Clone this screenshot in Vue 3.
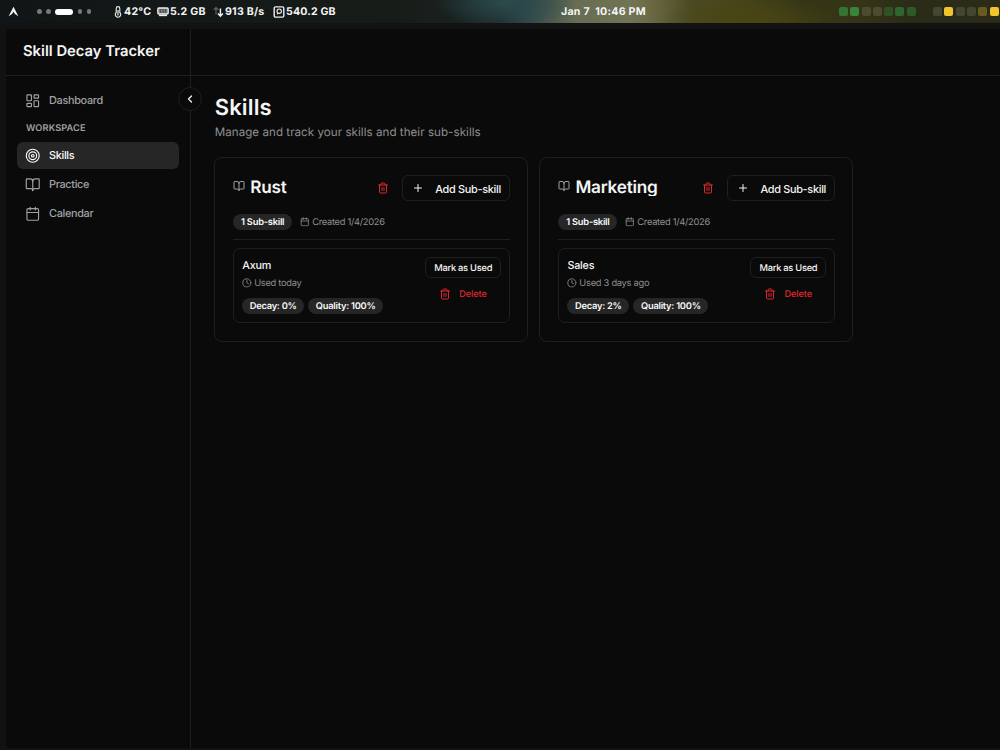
<template>
  <div class="desktop">
    <!-- icon shapes -->
    <svg class="symbols" width="0" height="0">
      <symbol id="dashboard" viewBox="0 0 24 24">
        <rect x="3" y="3" width="7" height="9" rx="1" />
        <rect x="14" y="3" width="7" height="5" rx="1" />
        <rect x="14" y="12" width="7" height="9" rx="1" />
        <rect x="3" y="16" width="7" height="5" rx="1" />
      </symbol>
      <symbol id="target" viewBox="0 0 24 24">
        <circle cx="12" cy="12" r="10" />
        <circle cx="12" cy="12" r="6" />
        <circle cx="12" cy="12" r="2" />
      </symbol>
      <symbol id="book" viewBox="0 0 24 24">
        <path d="M12 7v14" />
        <path d="M3 18a1 1 0 0 1-1-1V4a1 1 0 0 1 1-1h5a4 4 0 0 1 4 4 4 4 0 0 1 4-4h5a1 1 0 0 1 1 1v13a1 1 0 0 1-1 1h-6a3 3 0 0 0-3 3 3 3 0 0 0-3-3z" />
      </symbol>
      <symbol id="calendar" viewBox="0 0 24 24">
        <path d="M8 2v4M16 2v4M3 10h18" />
        <rect x="3" y="4" width="18" height="18" rx="2" />
      </symbol>
      <symbol id="chevron" viewBox="0 0 24 24">
        <path d="m15 18-6-6 6-6" />
      </symbol>
      <symbol id="trash" viewBox="0 0 24 24">
        <path d="M10 11v6M14 11v6M3 6h18" />
        <path d="M19 6v14a2 2 0 0 1-2 2H7a2 2 0 0 1-2-2V6" />
        <path d="M8 6V4a2 2 0 0 1 2-2h4a2 2 0 0 1 2 2v2" />
      </symbol>
      <symbol id="plus" viewBox="0 0 24 24">
        <path d="M5 12h14M12 5v14" />
      </symbol>
      <symbol id="clock" viewBox="0 0 24 24">
        <circle cx="12" cy="12" r="10" />
        <path d="M12 6v6l4 2" />
      </symbol>
    </svg>

    <!-- system bar -->
    <div class="topbar">
      <svg class="arch" viewBox="0 0 12 12"><path d="M6 .7 11.3 11.2 7.6 8.7 6 6.2 4.4 8.7.7 11.2z" fill="#f2f2f2" /></svg>
      <div class="workspaces">
        <i v-for="n in 5" :key="n" :class="{ current: n === 3 }"></i>
      </div>
      <div class="stats">
        <span class="stat temp">
          <svg viewBox="0 0 8 12"><path d="M2.2 6.5V2.4a1.8 1.8 0 0 1 3.6 0v4.1a2.7 2.7 0 1 1-3.6 0z" fill="none" stroke="#eee" stroke-width="1.1" /><path d="M4 4v5.5" stroke="#eee" stroke-width="1.2" /></svg>42°C
        </span>
        <span class="stat ram">
          <svg viewBox="0 0 12 12"><rect x=".8" y="2" width="10.4" height="6" rx="1" fill="#777" stroke="#eee" stroke-width="1.3" /><path d="M2 9.5h8" stroke="#eee" stroke-width="1.3" /><path d="M3.5 3v4M6 3v4M8.5 3v4" stroke="#444" stroke-width=".7" /></svg>5.2 GB
        </span>
        <span class="stat net">
          <svg viewBox="0 0 12 12"><path d="M3 8.5V1.7M.8 3.8 3 1.5l2.2 2.3" fill="none" stroke="#666" stroke-width="1.1" /><path d="M7.4 2.5v7.3M4.9 7.5l2.5 2.6 2.5-2.6" fill="none" stroke="#eee" stroke-width="1.5" /></svg>913 B/s
        </span>
        <span class="stat disk">
          <svg viewBox="0 0 12 12"><rect x="1.2" y=".9" width="9.6" height="10.2" rx="1.3" fill="none" stroke="#eee" stroke-width="1.4" /><circle cx="6.2" cy="5.2" r="2.2" fill="none" stroke="#eee" stroke-width="1.1" /><path d="m4.4 6.2-.6 2.6 2-1.4z" fill="#eee" /></svg>540.2 GB
        </span>
      </div>
      <div class="datetime">Jan 7&nbsp; 10:46 PM</div>
      <div class="squares">
        <i v-for="(c, i) in squares" :key="i" :class="{ split: i === 7 }" :style="{ background: c }"></i>
      </div>
    </div>

    <div class="window">
      <aside class="sidebar">
        <div class="brand">Skill Decay Tracker</div>
        <nav>
          <a class="item"><svg class="icon"><use href="#dashboard" /></svg>Dashboard</a>
          <div class="group">WORKSPACE</div>
          <a v-for="m in menu" :key="m.label" class="item" :class="{ active: m.label === page }" @click="page = m.label">
            <svg class="icon"><use :href="'#' + m.icon" /></svg>{{ m.label }}
          </a>
        </nav>
        <button class="collapse"><svg class="icon"><use href="#chevron" /></svg></button>
      </aside>

      <main>
        <header></header>
        <section class="content">
          <h1>Skills</h1>
          <p class="subtitle">Manage and track your skills and their sub-skills</p>

          <div class="cards">
            <article v-for="s in skills" :key="s.name" class="card">
              <div class="card-head">
                <svg class="icon book"><use href="#book" /></svg>
                <h2>{{ s.name }}</h2>
                <svg class="icon trash"><use href="#trash" /></svg>
                <button class="add"><svg class="icon"><use href="#plus" /></svg><span>Add Sub-skill</span></button>
              </div>
              <div class="meta">
                <span class="badge count">1 Sub-skill</span>
                <svg class="icon"><use href="#calendar" /></svg>
                <span class="created">Created {{ s.created }}</span>
              </div>
              <div class="sub">
                <div class="info">
                  <h3>{{ s.sub }}</h3>
                  <div class="used"><svg class="icon"><use href="#clock" /></svg><span>{{ s.used }}</span></div>
                  <div class="badges">
                    <span class="badge decay">Decay: {{ s.decay }}%</span>
                    <span class="badge quality">Quality: 100%</span>
                  </div>
                </div>
                <div class="actions">
                  <button class="mark">Mark as Used</button>
                  <button class="delete"><svg class="icon"><use href="#trash" /></svg><span>Delete</span></button>
                </div>
              </div>
            </article>
          </div>
        </section>
      </main>
    </div>
  </div>
</template>

<script setup>
import { ref } from 'vue'

const page = ref('Skills')

const menu = [
  { label: 'Skills', icon: 'target' },
  { label: 'Practice', icon: 'book' },
  { label: 'Calendar', icon: 'calendar' }
]

const skills = [
  { name: 'Rust', created: '1/4/2026', sub: 'Axum', used: 'Used today', decay: 0 },
  { name: 'Marketing', created: '1/4/2026', sub: 'Sales', used: 'Used 3 days ago', decay: 2 }
]

const squares = [
  '#357332', '#38843b', '#4c4b30', '#4c4b30', '#315323', '#30652f', '#2e5929',
  '#45462f', '#f0c52f', '#45462f', '#45462f', '#695b1b', '#f0c52f'
]
</script>

<style>
body {
  margin: 0;
  background: #121212;
}
</style>

<style scoped>
* {
  box-sizing: border-box;
}

.desktop {
  width: 1000px;
  height: 750px;
  overflow: hidden;
  display: flex;
  flex-direction: column;
  background: #121212;
  color: #f5f5f5;
  font-family: Inter, sans-serif;
  text-rendering: geometricPrecision;
}

.symbols {
  position: absolute;
}

.icon {
  flex: none;
  fill: none;
  stroke: currentColor;
  stroke-width: 2;
  stroke-linecap: round;
  stroke-linejoin: round;
}

button {
  font-family: inherit;
  color: inherit;
  background: none;
  border: 1px solid #1f1f1f;
  padding: 0;
  display: flex;
  align-items: center;
  text-rendering: inherit;
}

/* system bar */
.topbar {
  height: 23px;
  flex: none;
  display: flex;
  align-items: center;
  background:
    radial-gradient(ellipse 90px 22px at 750px 20px, #4a4512, transparent),
    radial-gradient(ellipse 70px 26px at 505px 2px, #2c4a4d, transparent),
    linear-gradient(90deg, #101617 0, #171c18 400px, #19211f 450px, #1e2d2e 500px, #33494a 530px, #666d52 575px, #717455 630px, #6b6a45 650px, #4b4b23 690px, #47441a 740px, #343617 800px, #353416 860px, #2a2c18 910px, #2b2b18 1000px);
  font-weight: 700;
  font-size: 10.6px;
  letter-spacing: 0.24px;
}

.arch {
  width: 11px;
  height: 11px;
  margin-left: 8px;
}

.workspaces {
  display: flex;
  align-items: center;
  gap: 4.5px;
  margin-left: 18px;
}

.workspaces i {
  width: 4.5px;
  height: 4.5px;
  border-radius: 3px;
  background: #777a7a;
}

.workspaces .current {
  width: 18px;
  height: 6px;
  background: #fff;
}

.stats {
  display: flex;
  margin-left: 23px;
  width: 447px;
}

.stat {
  display: flex;
  align-items: center;
  white-space: nowrap;
}

.stat svg {
  width: 12px;
  height: 12px;
  flex: none;
}

.temp {
  width: 43px;
}

.temp svg {
  width: 8px;
  margin-right: 2px;
}

.ram {
  width: 56px;
}

.ram svg {
  margin-right: 1px;
}

.net {
  width: 60px;
}

.disk {
  letter-spacing: 0.15px;
}

.disk svg {
  margin-right: 1px;
}

.datetime {
  width: 278px;
}

.squares {
  display: flex;
  gap: 2.3px;
}

.squares i {
  width: 9px;
  height: 9px;
  border-radius: 2px;
}

.squares .split {
  margin-left: 15px;
}

/* app window */
.window {
  display: flex;
  width: 1000px;
  height: 719px;
  margin: 6px 0 0 6px;
  border-radius: 4px;
  background: #0a0a0a;
}

.sidebar {
  position: relative;
  width: 185px;
  flex: none;
  border-right: 1px solid #1f1f1f;
}

.brand {
  height: 47px;
  padding-left: 17px;
  line-height: 45px;
  border-bottom: 1px solid #1f1f1f;
  font-size: 14.8px;
  font-weight: 600;
}

nav {
  padding: 11px 11px 0;
}

.item {
  display: flex;
  align-items: center;
  height: 27px;
  margin-bottom: 2px;
  padding: 0 0 1px 8px;
  border-radius: 6px;
  color: #a1a1a1;
  font-size: 10.9px;
  font-weight: 500;
  letter-spacing: -0.33px;
}

.item .icon {
  width: 15.5px;
  height: 15.5px;
  margin: 1px 8.5px 0 0;
  stroke-width: 1.8;
}

.item.active {
  background: #262626;
  color: #fafafa;
}

.group {
  height: 26px;
  padding-left: 9px;
  line-height: 25px;
  color: #a1a1a1;
  font-size: 9.2px;
  font-weight: 600;
  letter-spacing: 0.13px;
}

.collapse {
  position: absolute;
  top: 57.5px;
  right: -12px;
  width: 24px;
  height: 24px;
  justify-content: center;
  border-radius: 50%;
  background: #0a0a0a;
}

.collapse .icon {
  width: 12px;
  height: 12px;
  stroke-width: 2.5;
}

main {
  flex: 1;
}

header {
  height: 47px;
  border-bottom: 1px solid #1f1f1f;
}

.content {
  padding: 19px 0 0 23.2px;
}

h1 {
  margin: 0 0 0 0.5px;
  line-height: 26px;
  font-size: 22px;
  font-weight: 600;
  letter-spacing: 0.15px;
}

.subtitle {
  margin: 2px 0 16px 0.5px;
  line-height: 18px;
  font-size: 11.6px;
  letter-spacing: 0.04px;
  color: #8f8f8f;
}

.cards {
  display: flex;
  gap: 11.2px;
}

.card {
  width: 314px;
  height: 185px;
  padding: 17px 17px 17px 18px;
  border: 1px solid #1f1f1f;
  border-radius: 8px;
}

.card-head {
  display: flex;
  align-items: center;
  height: 26px;
}

.book {
  width: 12px;
  height: 12px;
  margin: -4px 5px 0 0;
  color: #a1a1a1;
}

h2 {
  flex: 1;
  margin: -2px 0 0;
  height: 17px;
  line-height: 18px;
  overflow: hidden;
  font-size: 17.2px;
  font-weight: 600;
  letter-spacing: -0.22px;
}

.trash {
  width: 12px;
  height: 12px;
  margin-right: 13.5px;
  color: #dc262c;
}

.add {
  width: 108px;
  height: 26px;
  padding-left: 9px;
  border-radius: 6px;
  font-size: 10.9px;
  font-weight: 500;
  letter-spacing: -0.3px;
}

.add .icon {
  width: 12px;
  height: 12px;
  margin-right: 11px;
}

.add span {
  padding-top: 1px;
}

.meta {
  display: flex;
  align-items: center;
  height: 39px;
  padding-top: 4px;
  margin-bottom: 8px;
  border-bottom: 1px solid #1f1f1f;
  color: #8f8f8f;
  font-size: 9.3px;
  letter-spacing: -0.28px;
}

.meta .icon {
  width: 9.6px;
  height: 9.6px;
  margin: 0 2.4px 0 8px;
}

.created {
  padding-top: 1px;
}

.badge {
  display: flex;
  align-items: center;
  justify-content: center;
  height: 16px;
  border-radius: 8px;
  background: #262626;
  color: #fafafa;
  font-size: 9.3px;
  font-weight: 600;
  letter-spacing: -0.24px;
}

.count {
  width: 59px;
}

.sub {
  display: flex;
  justify-content: space-between;
  height: 75px;
  padding: 8px;
  border: 1px solid #1f1f1f;
  border-radius: 7px;
}

h3 {
  margin: 0;
  line-height: 17px;
  font-size: 10.8px;
  font-weight: 500;
  letter-spacing: -0.2px;
}

.used {
  display: flex;
  align-items: center;
  height: 14px;
  margin: 2px 0 8px;
  color: #8f8f8f;
  font-size: 9.3px;
  letter-spacing: -0.27px;
}

.used .icon {
  width: 9.8px;
  height: 9.8px;
  margin-right: 2.2px;
}

.used span {
  padding-top: 1px;
}

.badges {
  display: flex;
  gap: 4px;
}

.decay {
  width: 62px;
}

.quality {
  width: 75px;
}

.mark {
  width: 76px;
  height: 21px;
  padding-top: 1px;
  justify-content: center;
  border-radius: 6px;
  font-size: 9.3px;
  font-weight: 500;
  letter-spacing: -0.26px;
}

.delete {
  height: 21px;
  margin-top: 5px;
  padding-left: 13px;
  border-color: transparent;
  color: #dc262c;
  font-size: 9.3px;
  font-weight: 500;
  letter-spacing: -0.15px;
}

.delete .icon {
  width: 12px;
  height: 12px;
  margin-right: 8px;
}

.delete span {
  padding-top: 1px;
}
</style>
